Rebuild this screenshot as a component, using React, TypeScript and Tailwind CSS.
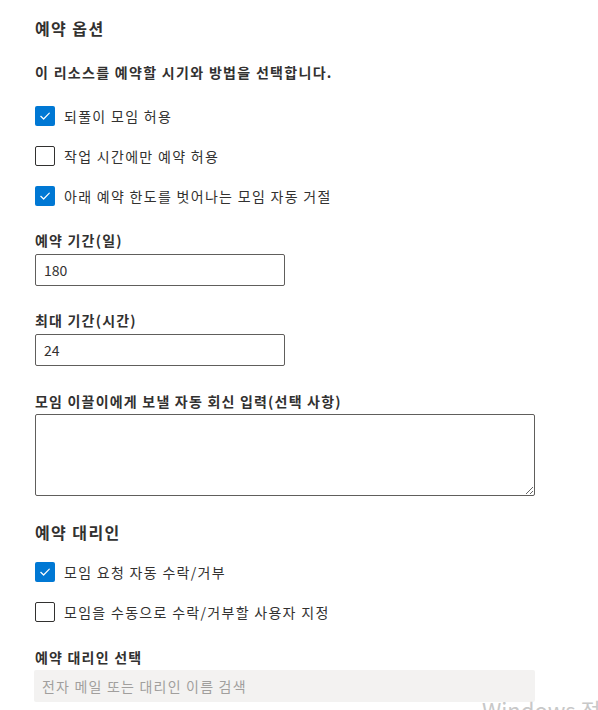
import { useState } from "react";

const FONT = "font-['Segoe_UI','Noto_Sans_CJK_KR','Noto_Sans',sans-serif]";

function Check({ checked, label }: { checked: boolean; label: string }) {
  return (
    <label className="flex items-center gap-[9px] h-5">
      <span
        className={
          checked
            ? "w-5 h-5 rounded-[2px] bg-[#0078d4] flex items-center justify-center"
            : "w-5 h-5 rounded-[2px] border border-[#323130] bg-white"
        }
      >
        {checked ? (
          <svg width="12" height="12" viewBox="0 0 12 12" fill="none">
            <path d="M1.8 6.3 L4.6 9 L10.3 3.2" stroke="white" strokeWidth="1.2" strokeLinecap="round" strokeLinejoin="round" />
          </svg>
        ) : null}
      </span>
      <span className="text-[14px] tracking-[1.3px] text-[#323130]">{label}</span>
    </label>
  );
}

function Field({ label, value }: { label: string; value: string }) {
  return (
    <div className="flex flex-col">
      <p className="text-[14px] tracking-[1.2px] font-semibold text-[#323130] leading-5 mb-[4px]">{label}</p>
      <input
        className="w-[250px] h-8 rounded-[2px] border border-[#605e5c] px-2 text-[14px] text-[#323130] outline-none"
        defaultValue={value}
      />
    </div>
  );
}

export default function App() {
  const [reply, setReply] = useState("");

  return (
    <div className={`relative w-[598px] h-[710px] overflow-hidden bg-white ${FONT}`}>
      <div className="pl-[35px] pt-[17px] flex flex-col">
        <h2 className="text-[16px] tracking-[1.4px] font-semibold text-[#323130] leading-[22px]">예약 옵션</h2>
        <p className="mt-[23px] text-[14px] tracking-[1.3px] font-semibold text-[#323130] leading-5">
          이 리소스를 예약할 시기와 방법을 선택합니다.
        </p>

        <div className="mt-[24px] flex flex-col gap-5">
          <Check checked label="되풀이 모임 허용" />
          <Check checked={false} label="작업 시간에만 예약 허용" />
          <Check checked label="아래 예약 한도를 벗어나는 모임 자동 거절" />
        </div>

        <div className="mt-[24px] flex flex-col gap-[24px]">
          <Field label="예약 기간(일)" value="180" />
          <Field label="최대 기간(시간)" value="24" />
        </div>

        <div className="mt-[25px] flex flex-col">
          <p className="text-[14px] tracking-[1.2px] font-semibold text-[#323130] leading-5 mb-[3px]">
            모임 이끌이에게 보낼 자동 회신 입력(선택 사항)
          </p>
          <textarea
            className="w-[500px] h-[82px] rounded-[2px] border border-[#605e5c] px-2 py-1 text-[14px] outline-none resize"
            value={reply}
            onChange={(e) => setReply(e.target.value)}
          />
        </div>

        <h2 className="mt-[25px] text-[16px] tracking-[1.4px] font-semibold text-[#323130] leading-[22px]">예약 대리인</h2>

        <div className="mt-[19px] flex flex-col gap-5">
          <Check checked label="모임 요청 자동 수락/거부" />
          <Check checked={false} label="모임을 수동으로 수락/거부할 사용자 지정" />
        </div>

        <div className="mt-[25px] flex flex-col">
          <p className="text-[14px] tracking-[1.2px] font-semibold text-[#323130] leading-5 mb-[3px]">예약 대리인 선택</p>
          <input
            disabled
            placeholder="전자 메일 또는 대리인 이름 검색"
            className="w-[501px] -ml-px h-8 rounded-[2px] bg-[#f3f2f1] px-2 text-[14px] tracking-[1.2px] placeholder:text-[#a19f9d] outline-none"
          />
        </div>
      </div>

      <span className="absolute left-[482px] top-[695px] text-[22px] leading-7 text-[#c8c8c8] whitespace-nowrap">
        Windows 정품 인증
      </span>
    </div>
  );
}
